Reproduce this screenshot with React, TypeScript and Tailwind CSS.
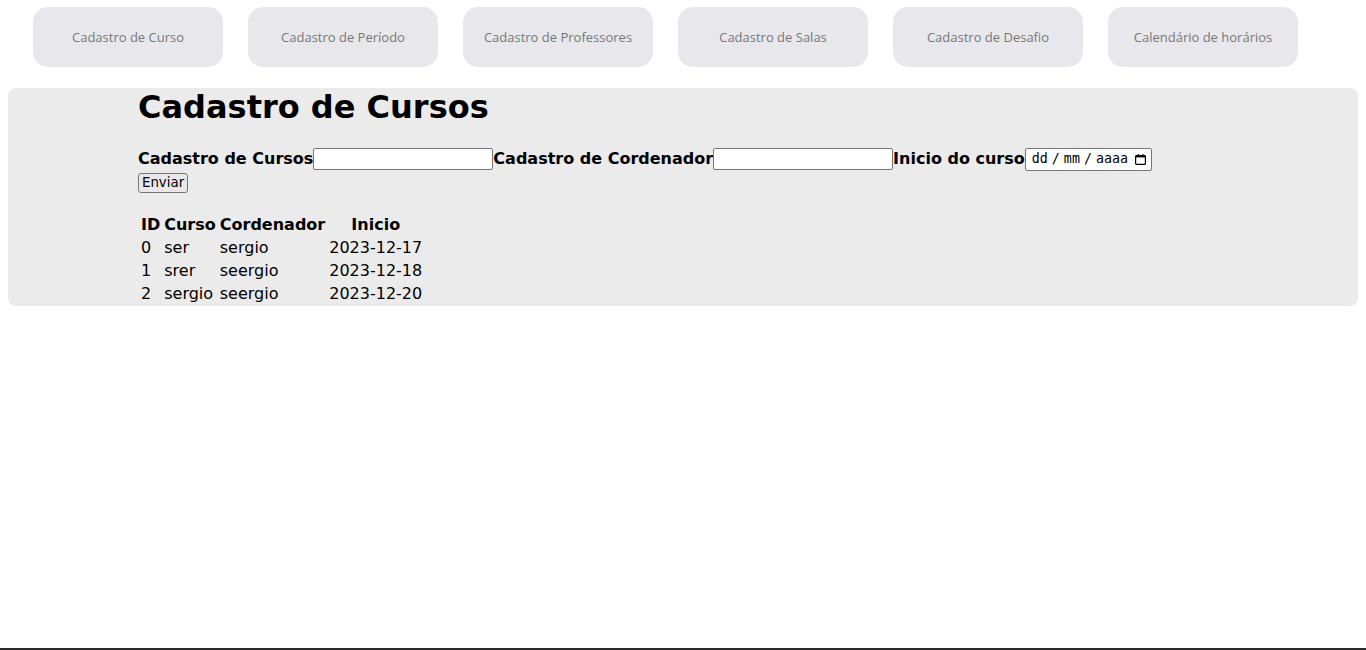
import React from "react";

const links = [
  "Cadastro de Curso",
  "Cadastro de Período",
  "Cadastro de Professores",
  "Cadastro de Salas",
  "Cadastro de Desafio",
  "Calendário de horários",
];

const cursos = [
  { id: 0, curso: "ser", cordenador: "sergio", inicio: "2023-12-17" },
  { id: 1, curso: "srer", cordenador: "seergio", inicio: "2023-12-18" },
  { id: 2, curso: "sergio", cordenador: "seergio", inicio: "2023-12-20" },
];

function CalendarIcon() {
  return (
    <svg width="13" height="13" viewBox="0 0 13 13" className="ml-[6px]">
      <rect x="1.6" y="2.6" width="9.8" height="8.8" rx="1" fill="none" stroke="#000" strokeWidth="1.2" />
      <rect x="1.6" y="2.6" width="9.8" height="1.8" fill="#000" />
      <rect x="3.6" y="1" width="1.2" height="2" fill="#000" />
      <rect x="8.2" y="1" width="1.2" height="2" fill="#000" />
    </svg>
  );
}

export default function App() {
  return (
    <div className="min-h-screen bg-white px-2 pt-[7px] font-['DejaVu_Sans',sans-serif] text-black">
      {/* Menu */}
      <nav className="flex gap-[25px] pl-[25px]">
        {links.map((l) => (
          <button
            key={l}
            className="flex h-[60px] w-[190px] items-center justify-center rounded-[15px] bg-[#e8e8ec] pt-[2px] font-['Open_Sans',sans-serif] text-[13px] text-[#777]"
          >
            {l}
          </button>
        ))}
      </nav>

      <section className="mt-[21px] rounded-[8px] bg-[#ebebeb] pl-[130px] pr-[130px] pt-[1px]">
        <h1 className="mb-[21px] text-[32px] font-bold leading-[37px]">Cadastro de Cursos</h1>

        <form className="flex flex-col items-start">
          <div className="flex h-[24px] items-center text-[16px] font-bold">
            <label>Cadastro de Cursos</label>
            <input className="h-[22px] w-[180px] rounded-[2px] border border-[#767676] bg-white" />
            <label>Cadastro de Cordenador</label>
            <input className="h-[22px] w-[180px] rounded-[2px] border border-[#767676] bg-white" />
            <label>Inicio do curso</label>
            <div className="flex h-[23px] w-[127px] items-center rounded-[2px] border border-[#767676] bg-white pl-[6px] font-['DejaVu_Sans_Mono',monospace] text-[13.33px] font-normal">
              <span>dd</span>
              <span className="mx-[4px]">/</span>
              <span>mm</span>
              <span className="mx-[4px]">/</span>
              <span>aaaa</span>
              <CalendarIcon />
            </div>
          </div>
          <button
            type="button"
            className="mt-[2px] h-[20px] rounded-[3px] border border-[#767676] bg-[#e9e9ed] px-[3px] text-[13.33px] leading-none"
          >
            Enviar
          </button>
        </form>

        <table className="mt-[19px] border-separate border-spacing-[2px] text-[16px] leading-[19px]">
          <thead>
            <tr>
              <th className="p-[1px] text-center font-bold">ID</th>
              <th className="p-[1px] text-center font-bold">Curso</th>
              <th className="p-[1px] text-center font-bold">Cordenador</th>
              <th className="p-[1px] text-center font-bold">Inicio</th>
            </tr>
          </thead>
          <tbody>
            {cursos.map((c) => (
              <tr key={c.id}>
                <td className="p-[1px]">{c.id}</td>
                <td className="p-[1px]">{c.curso}</td>
                <td className="p-[1px]">{c.cordenador}</td>
                <td className="p-[1px]">{c.inicio}</td>
              </tr>
            ))}
          </tbody>
        </table>
      </section>

      <div className="fixed bottom-0 left-0 h-[2px] w-full bg-[#2b2b2b]" />
    </div>
  );
}
